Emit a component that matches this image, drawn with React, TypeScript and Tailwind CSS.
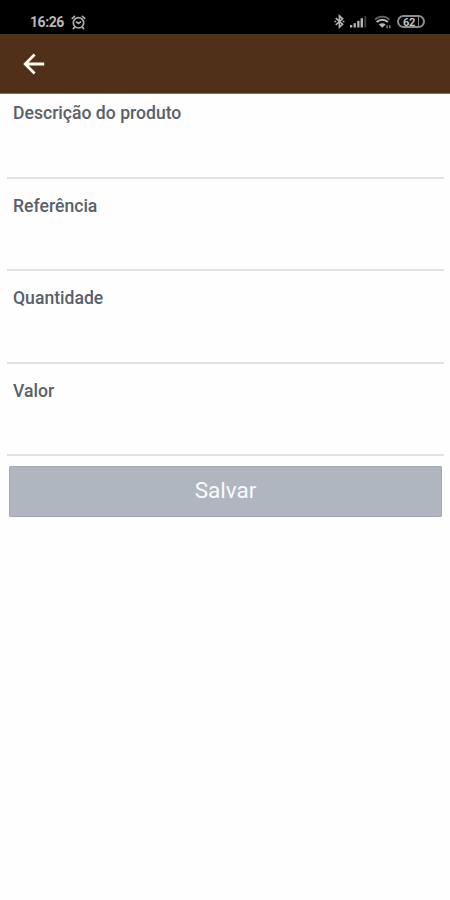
import { useState } from "react"

const fields = [
  { id: "descricao", label: "Descrição do produto", height: "h-[85px] pt-[7px]" },
  { id: "referencia", label: "Referência", height: "h-[92px] pt-[15px]" },
  { id: "quantidade", label: "Quantidade", height: "h-[93px] pt-[15px]" },
  { id: "valor", label: "Valor", height: "h-[92px] pt-[15px]" },
]

function AlarmIcon() {
  return (
    <svg width="15" height="15" viewBox="0 0 15 15" fill="none" stroke="#adadad" strokeWidth="1.7" strokeLinecap="round">
      <circle cx="7.5" cy="7.8" r="5.2" />
      <path d="M1.3 3.4 3.5 1.4M13.7 3.4l-2.2-2M3.4 12.4l-1 1.2M11.6 12.4l1 1.2" />
      <path d="M5.5 7 7.5 8.4 9.5 7" />
    </svg>
  )
}

function BluetoothIcon() {
  return (
    <svg width="11" height="15" viewBox="0 0 11 15" fill="none" stroke="#b4b4b4" strokeWidth="1.6">
      <path d="M1.8 4.2 8.6 10.2 5.4 13.2V1.8L8.6 4.8 1.8 10.8" />
      <path d="M.4 7.5h1.8M8.6 7.5h1.8" />
    </svg>
  )
}

function SignalIcon() {
  return (
    <svg width="17" height="12" viewBox="0 0 17 12" fill="#b4b4b4">
      <rect x="0" y="9" width="2.3" height="2.5" />
      <rect x="3.6" y="7.2" width="2.3" height="4.3" />
      <rect x="7.2" y="4.8" width="2.3" height="6.7" />
      <rect x="10.6" y="2.2" width="2.4" height="9.3" />
      <rect x="14.4" y="0" width="1.8" height="11.5" fill="#414141" />
    </svg>
  )
}

function WifiIcon() {
  return (
    <svg width="18" height="14" viewBox="0 0 18 14" fill="none">
      <path d="M1 4.6c4-4 10.5-4 14.5 0" stroke="#626262" strokeWidth="1.8" />
      <path d="M2.6 7.1c3.3-3.1 8-3.1 11.3 0" stroke="#b8b8b8" strokeWidth="2" />
      <path d="M4.9 9.4c1.9-1.7 4.9-1.7 6.8 0L8.3 12.8z" fill="#b8b8b8" />
      <path d="M13.2 10.2v3M15.8 10.2v3" stroke="#858585" strokeWidth="1.4" />
    </svg>
  )
}

function Battery() {
  return (
    <div className="flex h-[13px] w-[28px] items-center rounded-full border-2 border-[#8c8c8c]">
      <div className="flex h-full flex-1 items-center justify-center border-r-[1.5px] border-[#8a8a8a] pt-px pl-px text-[11px] leading-none font-bold tracking-[-0.3px] text-[#c4c4c4]">
        62
      </div>
      <div className="w-[4px]" />
    </div>
  )
}

function StatusBar() {
  return (
    <div className="flex h-[34px] items-start justify-between bg-black pr-[25px] pl-[30px]">
      <div className="flex items-center pt-[13px]">
        <span className="w-[34px] text-[14px] leading-[18px] font-bold tracking-[-0.45px] text-[#b8b8b8]">16:26</span>
        <span className="ml-[7px]">
          <AlarmIcon />
        </span>
      </div>
      <div className="mt-[14px] flex h-[15px] items-center">
        <BluetoothIcon />
        <span className="ml-[5px]">
          <SignalIcon />
        </span>
        <span className="mr-[5px] ml-[7px]">
          <WifiIcon />
        </span>
        <Battery />
      </div>
    </div>
  )
}

export default function App() {
  const [values, setValues] = useState<Record<string, string>>({})

  return (
    <div className="h-[900px] w-[450px] overflow-hidden bg-[#fefefe] font-['Roboto',sans-serif]">
      <StatusBar />

      <header className="flex h-[60px] items-center border-b border-[#88715c] bg-[#503018] pl-[23px]">
        <button aria-label="Voltar">
          <svg width="22" height="22" viewBox="0 0 22 22" fill="none" stroke="#fffaf2" strokeWidth="2.8">
            <path d="M21.2 11H2.4M11.6 1.6 2.2 11l9.4 9.4" />
          </svg>
        </button>
      </header>

      <form onSubmit={(e) => e.preventDefault()}>
        <div className="mr-[6px] ml-[7px]">
          {fields.map(({ id, label, height }) => (
            <div key={id} className={`flex flex-col border-b-2 border-[#e0e1e2] pl-[6px] ${height}`}>
              <label htmlFor={id} className="text-[17.6px] leading-6 font-medium text-[#596068]">
                {label}
              </label>
              <input
                id={id}
                value={values[id] ?? ""}
                onChange={(e) => setValues({ ...values, [id]: e.target.value })}
                className="min-h-0 flex-1 bg-transparent text-lg outline-none"
              />
            </div>
          ))}
        </div>

        <button
          type="submit"
          className="mt-[10px] ml-[9px] flex h-[51px] w-[433px] items-center justify-center rounded-[1px] border border-[#a4a9ae] bg-[#afb6c0] pb-px text-[22.5px] text-[#f8fafc]"
        >
          Salvar
        </button>
      </form>
    </div>
  )
}
